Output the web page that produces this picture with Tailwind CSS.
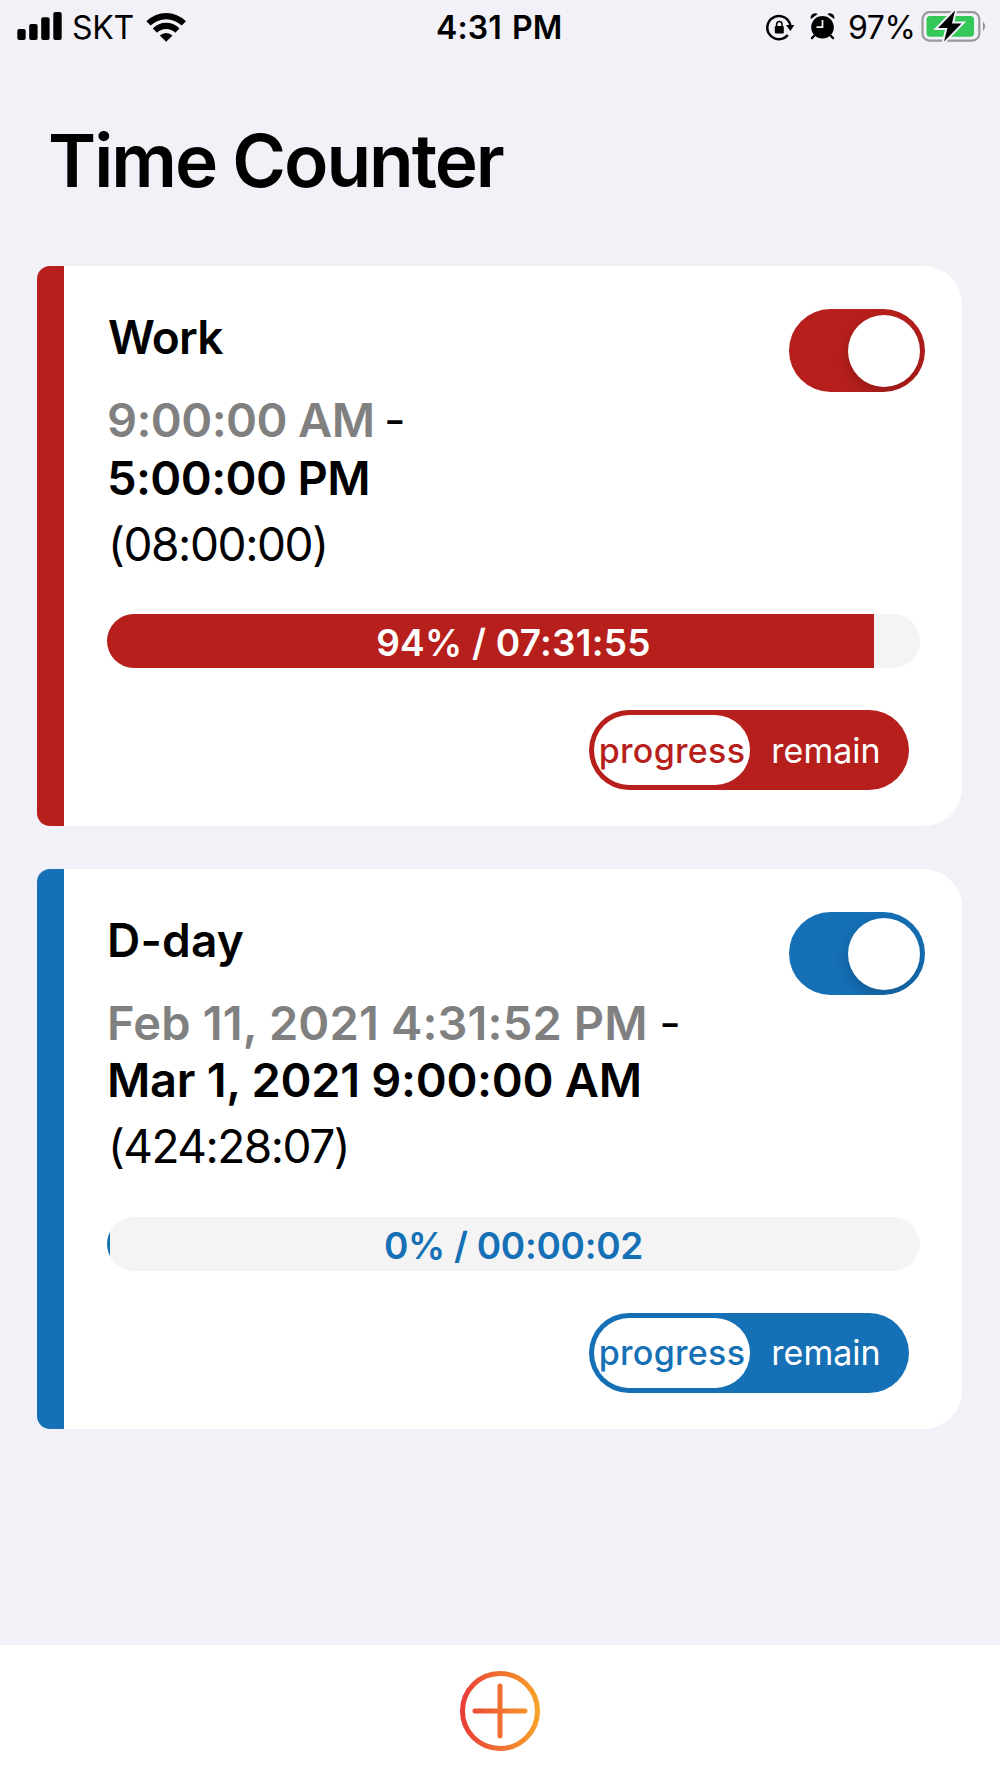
<!DOCTYPE html>
<html lang="en">
<head>
  <meta charset="UTF-8">
  <meta name="viewport" content="width=device-width, initial-scale=1.0">
  <title>Time Counter</title>
  <script src="https://cdn.jsdelivr.net/npm/@tailwindcss/browser@4"></script>
</head>
<body class="bg-[#f2f1f7] font-['Inter',sans-serif] text-black">
  <div class="w-[1000px] h-[1778px] flex flex-col overflow-hidden">

    <!-- Status bar -->
    <header class="relative h-[55px] shrink-0 flex items-start justify-between">
      <div class="flex">
        <svg class="w-[72px] h-[55px]" viewBox="0 0 72 55">
          <rect x="17.3" y="29" width="8.4" height="11" rx="2"/>
          <rect x="29.2" y="24" width="8.4" height="16" rx="2"/>
          <rect x="41.2" y="17.3" width="8.4" height="22.7" rx="2"/>
          <rect x="53.3" y="12" width="8.4" height="28" rx="2"/>
        </svg>
        <span class="w-[61px] h-[55px] leading-[56px] text-[32px] tracking-[-0.3px]">SKT</span>
        <svg class="w-[60px] h-[55px]" viewBox="133 0 60 55">
          <path d="M146.3 21.3a28 28 0 0 1 39.7 0l-4.3 4.3a22.500 22.500 0 0 0-31.1 0z"/>
          <path d="M152.8 28.5a18.6 18.6 0 0 1 26.7 0l-4.3 4.2a13 13 0 0 0-18.1 0z"/>
          <path d="M159.8 35.5a9 9 0 0 1 12.7 0l-6.3 6.2z"/>
        </svg>
      </div>
      <div class="absolute left-[436px] h-[55px] leading-[56px] text-[32px] tracking-[0.1px] font-semibold">4:31<span class="ml-[2px]"> PM</span></div>
      <div class="flex">
        <svg class="w-[85px] h-[55px]" viewBox="763 0 85 55">
          <!-- rotation lock -->
          <path d="M790.4 26a11.6 11.6 0 1 0-2.600 9" fill="none" stroke="#000" stroke-width="2.5"/>
          <path d="M786 25h8.400l-4 6z"/>
          <rect x="774.8" y="26" width="9" height="7.6" rx="1"/>
          <path d="M776.6 26.5v-2.2a2.7 2.7 0 0 1 5.4 0v2.2" fill="none" stroke="#000" stroke-width="1.5"/>
          <!-- alarm -->
          <circle cx="822.5" cy="27.3" r="11.3"/>
          <path d="M810.8 19a4.6 4.6 0 0 1 7-5zM834.2 19a4.6 4.6 0 0 0-7-5z"/>
          <path d="M814.5 35.5l-2.6 2.6M830.5 35.5l2.6 2.6" stroke="#000" stroke-width="2.2" stroke-linecap="round"/>
          <path d="M822.5 20v7.2h-6" fill="none" stroke="#f2f1f7" stroke-width="1.7"/>
        </svg>
        <span class="w-[68px] h-[55px] leading-[56px] text-[32px] tracking-[-0.4px]">97%</span>
        <svg class="w-[84px] h-[55px]" viewBox="916 0 84 55">
          <rect x="922.5" y="12.2" width="56.8" height="28.4" rx="7" fill="none" stroke="#99999d" stroke-width="2.2"/>
          <rect x="926.5" y="16" width="47.5" height="20.7" rx="3.5" fill="#34c759"/>
          <path d="M983 21.5q4 4.5 0 9.5z" fill="#8e8e92"/>
          <path d="M955 10.5l-17 17.5h9.5l-3.5 13.5 17.5-18h-9.5z" stroke="#f2f1f7" stroke-width="4" paint-order="stroke"/>
        </svg>
      </div>
    </header>

    <h1 class="mt-[65px] ml-[48px] h-[81px] leading-[81px] text-[73px] tracking-[-2.05px] font-semibold whitespace-nowrap">Time Counter</h1>

    <main class="mt-[65px] pl-[37px] pr-[38px] flex flex-col gap-[43px] shrink-0">
      <!-- Work -->
      <section class="h-[560px] flex rounded-l-[13px] rounded-r-[38px] overflow-hidden bg-white">
        <div class="w-[27px] bg-[#b71f1c]"></div>
        <div class="flex-1 pt-[43px] pl-[43px] pr-[37px]">
          <div class="flex justify-between items-start whitespace-nowrap">
            <div>
              <h2 class="pl-[1px] h-[57px] leading-[57px] text-[46px] tracking-[-0.8px] font-semibold">Work</h2>
              <p class="mt-[25px] h-[58px] leading-[58px] text-[47px] tracking-[-0.6px] font-semibold"><span class="text-[#808080]">9:00:00 AM</span><span class="ml-[-3px] font-normal"> -</span></p>
              <p class="h-[57px] leading-[57px] text-[47px] tracking-[-0.6px] font-semibold">5:00:00 PM</p>
              <p class="pl-[1px] mt-[9px] h-[57px] leading-[58px] text-[46px] tracking-[-1.4px]">(08:00:00)</p>
            </div>
            <div class="w-[136px] h-[83px] rounded-full bg-[#b71f1c] p-[5px] flex items-center justify-end overflow-hidden">
              <div class="w-[72px] h-[72px] rounded-full bg-white shadow-[0_6px_16px_rgba(0,0,0,0.2)]"></div>
            </div>
          </div>
          <div class="mt-[42px] w-[813px] h-[54px] rounded-full bg-[#f4f4f4] overflow-hidden relative">
            <div class="h-full bg-[#b71f1c]" style="width: 94.4%"></div>
            <div class="absolute inset-0 text-center leading-[58px] text-[37px] tracking-[0.25px] font-semibold text-white">94% / 07:31:55</div>
          </div>
          <div class="mt-[42px] ml-auto mr-[16px] w-[320px] h-[80px] rounded-full bg-[#b71f1c] p-[5px] flex text-[34px] leading-[71px] text-center">
            <div class="w-[156px] rounded-full bg-white text-[#b71f1c] tracking-[0.3px] font-medium">progress</div>
            <div class="flex-1 pr-[2px] text-white">remain</div>
          </div>
        </div>
      </section>

      <!-- D-day -->
      <section class="h-[560px] flex rounded-l-[13px] rounded-r-[38px] overflow-hidden bg-white">
        <div class="w-[27px] bg-[#1570b6]"></div>
        <div class="flex-1 pt-[43px] pl-[43px] pr-[37px]">
          <div class="flex justify-between items-start whitespace-nowrap">
            <div>
              <h2 class="h-[57px] leading-[57px] text-[46px] tracking-[0.2px] font-semibold">D-day</h2>
              <p class="mt-[25px] h-[58px] leading-[58px] text-[47px] tracking-[0.15px] font-semibold"><span class="text-[#808080]">Feb 11, 2021 4:31:52 PM</span><span class="ml-[-2px] font-normal"> -</span></p>
              <p class="h-[57px] leading-[56px] text-[47px] tracking-[-0.3px] font-semibold">Mar 1, 2021 9:00:00 AM</p>
              <p class="pl-[1px] mt-[9px] h-[57px] leading-[57px] text-[46px] tracking-[-1.5px]">(424:28:07)</p>
            </div>
            <div class="w-[136px] h-[83px] rounded-full bg-[#1570b6] p-[5px] flex items-center justify-end overflow-hidden">
              <div class="w-[72px] h-[72px] rounded-full bg-white shadow-[0_6px_16px_rgba(0,0,0,0.2)]"></div>
            </div>
          </div>
          <div class="mt-[42px] w-[813px] h-[54px] rounded-full bg-[#f4f4f4] overflow-hidden relative">
            <div class="h-full bg-[#1570b6]" style="width: 0.4%"></div>
            <div class="absolute inset-0 text-center leading-[58px] text-[37px] tracking-[-0.3px] font-semibold text-[#1570b6]">0% / 00:00:02</div>
          </div>
          <div class="mt-[42px] ml-auto mr-[16px] w-[320px] h-[80px] rounded-full bg-[#1570b6] p-[5px] flex text-[34px] leading-[70px] text-center">
            <div class="w-[156px] rounded-full bg-white text-[#1570b6] tracking-[0.3px] font-medium">progress</div>
            <div class="flex-1 pr-[2px] text-white">remain</div>
          </div>
        </div>
      </section>
    </main>

    <!-- Add button -->
    <footer class="mt-auto h-[133px] shrink-0 bg-white flex justify-center pt-[26px]">
      <svg class="w-[80px] h-[80px]" viewBox="0 0 80 80" fill="none" stroke="url(#warm)" stroke-width="5" stroke-linecap="round">
        <defs>
          <linearGradient id="warm" gradientUnits="userSpaceOnUse" x1="0" y1="0" x2="80" y2="0">
            <stop offset="0" stop-color="#e93a38"/>
            <stop offset="1" stop-color="#f7a428"/>
          </linearGradient>
        </defs>
        <circle cx="40" cy="40" r="37.5"/>
        <path d="M15 40h50M40 15v50"/>
      </svg>
    </footer>
  </div>
</body>
</html>
